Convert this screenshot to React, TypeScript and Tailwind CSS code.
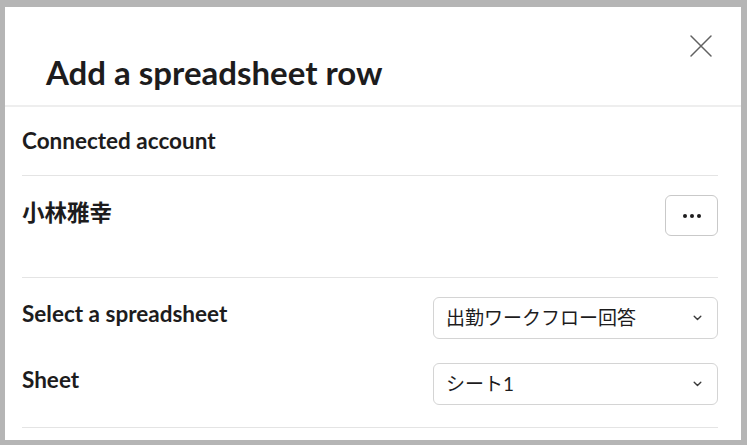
import React from "react";

const font = { fontFamily: "Lato, 'Noto Sans CJK JP', sans-serif" };

function Chevron() {
  return (
    <svg width="9" height="6" viewBox="0 0 9 6" fill="none">
      <path d="M1.2 1.2L4.5 4.5L7.8 1.2" stroke="#3a3a3a" strokeWidth="1.4" strokeLinecap="round" strokeLinejoin="round" />
    </svg>
  );
}

function SelectRow({ label, value }: { label: string; value: string }) {
  return (
    <div className="flex items-center justify-between">
      <span className="mb-[8px] text-[22.5px] font-bold leading-[28px] text-[#1d1c1d]">{label}</span>
      <div className="flex h-[42px] w-[285px] items-center justify-between rounded-[6px] border border-[#d4d4d4] pl-[12px] pr-[15px]">
        <span className="text-[19px] text-[#1d1c1d]">{value}</span>
        <Chevron />
      </div>
    </div>
  );
}

export default function App() {
  return (
    <div className="h-[445px] w-[747px] overflow-hidden bg-[#b5b5b5] pl-[5px] pr-[6px] pt-[7px]" style={font}>
      <div className="h-[433px] bg-white">
        <div className="flex h-[100px] items-start justify-between border-b-2 border-[#eeeeee]">
          <h1 className="pl-[41px] pt-[46px] text-[33px] font-bold leading-[38px] text-[#1d1c1d]">
            Add a spreadsheet row
          </h1>
          <button className="mr-[28px] mt-[27px]">
            <svg width="24" height="24" viewBox="0 0 24 24" fill="none">
              <path d="M2 2L22 22M22 2L2 22" stroke="#616161" strokeWidth="1.5" strokeLinecap="round" />
            </svg>
          </button>
        </div>
        <div className="pl-[17px] pr-[23px]">
          <div className="flex h-[69px] items-center border-b border-[#e4e4e4]">
            <span className="text-[22.5px] font-bold text-[#1d1c1d]">Connected account</span>
          </div>
          <div className="flex h-[102px] items-start justify-between border-b border-[#e4e4e4] pt-[19px]">
            <span className="mt-[3px] text-[22.5px] font-bold leading-[30px] text-[#1d1c1d]">小林雅幸</span>
            <button className="flex h-[41px] w-[53px] items-center justify-center rounded-[6px] border border-[#c9c9c9]">
              <span className="flex gap-[3px]">
                <span className="h-[4px] w-[4px] rounded-full bg-[#1d1c1d]" />
                <span className="h-[4px] w-[4px] rounded-full bg-[#1d1c1d]" />
                <span className="h-[4px] w-[4px] rounded-full bg-[#1d1c1d]" />
              </span>
            </button>
          </div>
          <div className="flex h-[150px] flex-col gap-[24px] border-b border-[#e4e4e4] pt-[19px]">
            <SelectRow label="Select a spreadsheet" value="出勤ワークフロー回答" />
            <SelectRow label="Sheet" value="シート1" />
          </div>
        </div>
      </div>
    </div>
  );
}
